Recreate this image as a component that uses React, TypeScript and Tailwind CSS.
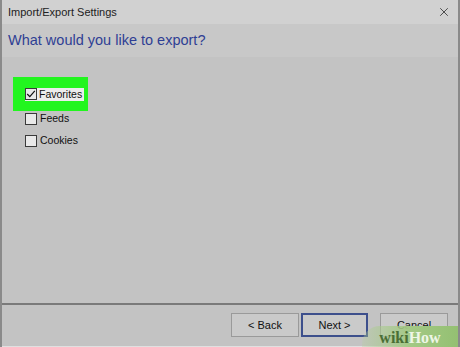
import { X } from "lucide-react";

function Box({ checked }: { checked?: boolean }) {
  return (
    <span className="flex h-[12px] w-[12px] items-center justify-center border border-[#3a3a3a] bg-[#e9e9e9]">
      {checked && (
        <svg width="10" height="10" viewBox="0 0 10 10">
          <path d="M1.2 5 L3.8 7.6 L8.8 1.8" stroke="#111" strokeWidth="1.2" fill="none" />
        </svg>
      )}
    </span>
  );
}

export default function App() {
  return (
    <div
      className="relative flex h-[347px] w-[460px] flex-col overflow-hidden border-l-2 border-r-2 border-l-[#8a8a8a] border-r-[#8a8a8a] bg-[#c3c3c3] text-[#111]"
      style={{ fontFamily: '"Liberation Sans", Arial, sans-serif' }}
    >
      {/* title bar */}
      <div className="flex h-[24px] items-center justify-between bg-[#d1d1d1] pl-[6px] pr-[7px]">
        <span className="text-[11px] text-[#222]">Import/Export Settings</span>
        <X size={14} strokeWidth={1.3} className="text-[#222]" />
      </div>

      {/* heading */}
      <div className="flex h-[33px] items-center bg-[#c8c8c8] pl-[6px]">
        <span className="text-[14.5px] text-[#2f3f94]">What would you like to export?</span>
      </div>

      {/* options */}
      <div className="flex flex-1 flex-col pl-[11px] pt-[20px]">
        <div className="flex h-[34px] w-[75px] items-center bg-[#22f51f] pl-[12px]">
          <div className="flex items-center gap-[2px] bg-[#ececec] pr-[2px]">
            <Box checked />
            <span className="text-[10.5px] leading-[13px]">Favorites</span>
          </div>
        </div>
        <label className="flex items-center gap-[3px] pl-[12px]">
          <Box />
          <span className="text-[10.5px]">Feeds</span>
        </label>
        <label className="mt-[6px] flex items-center gap-[3px] pl-[12px]">
          <Box />
          <span className="text-[10.5px]">Cookies</span>
        </label>
      </div>

      {/* footer */}
      <div className="flex h-[44px] items-start justify-end border-t-2 border-b border-t-[#7a7a7a] border-b-[#e0e0e0] pr-[10px] pt-[8px]">
        <button className="h-[24px] w-[68px] border border-[#9a9a9a] bg-[#cacaca] text-[11px]">&lt; Back</button>
        <button className="ml-[2px] h-[24px] w-[67px] border-2 border-[#3d4f8c] bg-[#cacaca] text-[11px]">Next &gt;</button>
        <button className="ml-[12px] h-[24px] w-[68px] border border-[#9a9a9a] bg-[#cacaca] text-[11px]">Cancel</button>
      </div>

      {/* wikiHow watermark */}
      <div className="absolute bottom-0 right-0 flex h-[21px] w-[96px] items-end justify-center rounded-tl-[18px] bg-gradient-to-r from-[#b5cf9c]/30 via-[#a3c985] to-[#94c072] pb-[1px]">
        <span className="text-[16px] font-bold leading-[17px]" style={{ fontFamily: '"Liberation Serif", serif' }}>
          <span className="text-[#4a6e35]">wiki</span>
          <span className="text-[#eef6e6]">How</span>
        </span>
      </div>
    </div>
  );
}
